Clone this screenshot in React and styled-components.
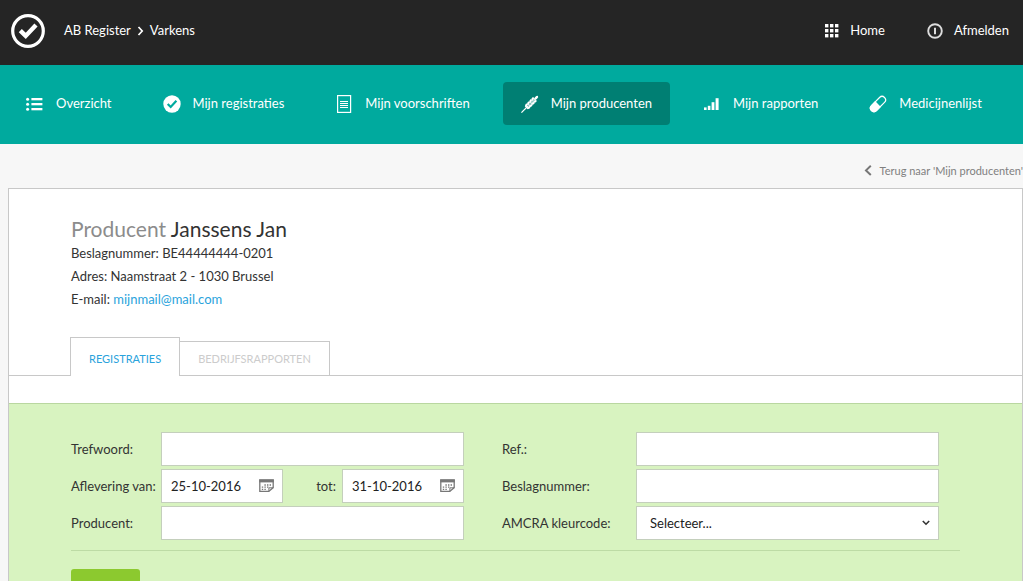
import { useState } from 'react'
import styled, { createGlobalStyle } from 'styled-components'

const GlobalStyle = createGlobalStyle`
	* {
		box-sizing: border-box;
	}
	body {
		margin: 0;
		background: #f7f7f7;
		color: #333;
		font-family: Lato, "Liberation Sans", sans-serif;
		font-size: 13px;
		line-height: 23px;
		overflow-x: hidden;
	}
	h1, p {
		margin: 0;
	}
	a {
		text-decoration: none;
	}
	input, select, button {
		font: inherit;
		color: inherit;
	}
`

const Header = styled.header`
	display: flex;
	align-items: center;
	justify-content: space-between;
	height: 65px;
	padding: 0 14px 4px 10px;
	background: #252525;
	color: #fff;
	a {
		color: inherit;
	}
`
const Brand = styled.div`
	display: flex;
	align-items: center;
	gap: 18px;
`
const Crumbs = styled.nav`
	display: flex;
	align-items: center;
	gap: 6px;
`
const HeaderLinks = styled.nav`
	display: flex;
	gap: 42px;
`
const HeaderLink = styled.a`
	display: flex;
	align-items: center;
	gap: 11px;
`

const Nav = styled.nav`
	display: flex;
	align-items: center;
	gap: 15px;
	height: 79px;
	padding: 0 8px 2px;
	background: #00aa9e;
`
const NavLink = styled.a`
	display: flex;
	align-items: center;
	gap: 12px;
	height: 43px;
	padding: 0 18px;
	border-radius: 4px;
	color: #fff;
	white-space: nowrap;
	background: ${({ $active }) => ($active ? '#007f73' : 'transparent')};
`

const BackBar = styled.div`
	display: flex;
	justify-content: flex-end;
	padding: 15px 0 6px;
`
const BackLink = styled.a`
	display: flex;
	align-items: center;
	gap: 8px;
	color: #808080;
	font-size: 11px;
`

const Panel = styled.main`
	margin-left: 8px;
	border: 1px solid #c8c8c8;
	border-bottom: 0;
	background: #fff;
`
const Info = styled.section`
	padding: 26px 62px;
`
const Title = styled.h1`
	font-size: 21px;
	font-weight: 400;
	line-height: 27px;
	span {
		color: #8c8c8c;
	}
`
const MailLink = styled.a`
	color: #2aa3dc;
`

const Tabs = styled.div`
	display: flex;
	align-items: flex-end;
	margin-bottom: 27px;
	padding: 0 61px;
	border-bottom: 1px solid #c8c8c8;
`
const Tab = styled.button`
	height: ${({ $active }) => ($active ? '39px' : '34px')};
	margin-bottom: ${({ $active }) => ($active ? '-1px' : '0')};
	padding: ${({ $active }) => ($active ? '3px 18px 0' : '0 18px')};
	border: 1px solid #c8c8c8;
	border-bottom: 0;
	border-left-width: ${({ $active }) => ($active ? '1px' : '0')};
	background: #fff;
	color: ${({ $active }) => ($active ? '#2aa3dc' : '#ccc')};
	font-size: 11px;
	text-transform: uppercase;
`

const Filter = styled.form`
	padding: 28px 62px;
	border-top: 1px solid #b9d7a0;
	background: #d8f3c0;
`
const Fields = styled.div`
	display: grid;
	grid-template-columns: 90px 1fr 172px 1fr;
	row-gap: 3px;
	align-items: center;
	padding: 0 21px 10px 0;
`
const Label = styled.label`
	padding-left: ${({ $second }) => ($second ? '38px' : '0')};
	white-space: nowrap;
`
const Input = styled.input`
	width: 100%;
	height: 34px;
	padding: 0 9px;
	border: 1px solid #c4cfbc;
	border-radius: 0;
	background: #fff;
	color: #222;
`
const Select = styled.select`
	width: 100%;
	height: 34px;
	padding: 0 13px;
	border: 1px solid #c4cfbc;
	border-radius: 0;
	background: #fff;
	color: #222;
	appearance: none;
`
const Control = styled.div`
	position: relative;
	width: ${({ $width }) => $width || 'auto'};
	svg {
		position: absolute;
		top: 50%;
		right: 9px;
		transform: translateY(-50%);
		pointer-events: none;
	}
`
const DateRange = styled.div`
	display: flex;
	align-items: center;
	label {
		margin-left: auto;
		margin-right: 6px;
	}
`
const Actions = styled.div`
	padding-top: 18px;
	border-top: 1px solid #bddba5;
`
const Submit = styled.button`
	min-width: 69px;
	height: 60px;
	border: 0;
	border-radius: 3px;
	background: #8cc92f;
	color: #fff;
`

const LogoIcon = () => (
	<svg width="36" height="36" viewBox="0 0 36 36" fill="none">
		<circle cx="18" cy="18" r="15.3" stroke="#fff" strokeWidth="3.2" />
		<path d="M10.3 17.6l5.4 5.3L26 12" stroke="#fff" strokeWidth="4.4" />
	</svg>
)
const CrumbIcon = () => (
	<svg width="7" height="10" viewBox="0 0 7 10" fill="none">
		<path d="M1.5 1l3.7 4-3.7 4" stroke="#fff" strokeWidth="1.7" />
	</svg>
)
const GridIcon = () => (
	<svg width="15" height="15" viewBox="0 0 15 15" fill="#fff">
		{[1, 6, 11].map((y) => [1, 6, 11].map((x) => <rect key={`${x}-${y}`} x={x} y={y} width="3.4" height="3.4" />))}
	</svg>
)
const PowerIcon = () => (
	<svg width="16" height="16" viewBox="0 0 16 16" fill="none" stroke="#ddd">
		<circle cx="8" cy="8" r="6.8" strokeWidth="1.9" />
		<path d="M8 4.7v6.6" strokeWidth="2" />
	</svg>
)
const ListIcon = () => (
	<svg width="18" height="18" viewBox="0 0 18 18" fill="#fff">
		{[3, 8, 13].map((y) => (
			<g key={y}>
				<circle cx="1.6" cy={y + 1.2} r="1.5" />
				<rect x="5.4" y={y} width="11" height="2.3" />
			</g>
		))}
	</svg>
)
const CheckIcon = () => (
	<svg width="18" height="18" viewBox="0 0 18 18">
		<circle cx="9" cy="9" r="8.7" fill="#fff" />
		<path d="M4.7 9l3 3 5.7-6.2" fill="none" stroke="#00aa9e" strokeWidth="2.2" />
	</svg>
)
const DocIcon = () => (
	<svg width="18" height="18" viewBox="0 0 18 18" fill="none" stroke="#fff">
		<rect x="2.6" y=".6" width="13" height="16.8" strokeWidth="1.2" />
		<path d="M5 6.5h8M5 8.5h8M5 10.5h8M5 12.5h8" strokeWidth="1" />
	</svg>
)
const WheatIcon = () => (
	<svg width="18" height="18" viewBox="0 0 18 18">
		<g transform="translate(0 18) rotate(-45)" fill="#fff">
			<rect x=".6" y="-.6" width="9" height="1.2" />
			{[7.5, 10.5, 13.5, 16.5].map((x) => (
				<g key={x}>
					<ellipse cx={x + 1.6} cy="-1.6" rx="1.9" ry="1.2" transform={`rotate(-20 ${x + 1.6} -1.6)`} />
					<ellipse cx={x + 1.6} cy="1.6" rx="1.9" ry="1.2" transform={`rotate(20 ${x + 1.6} 1.6)`} />
				</g>
			))}
			<rect x="8" y="-.3" width="13" height=".6" />
			<ellipse cx="21.4" cy="0" rx="2.6" ry="1.3" />
		</g>
	</svg>
)
const BarsIcon = () => (
	<svg width="18" height="18" viewBox="0 0 18 18" fill="#fff">
		<rect x="1" y="12.4" width="2.6" height="2.6" />
		<rect x="4.8" y="10.8" width="2.6" height="4.2" />
		<rect x="8.6" y="7.2" width="2.8" height="7.8" />
		<rect x="12.6" y="3.2" width="3" height="11.8" />
	</svg>
)
const PillIcon = () => (
	<svg width="18" height="18" viewBox="0 0 18 18">
		<g transform="rotate(-45 9 9)">
			<rect x="-.2" y="5.5" width="18.4" height="7" rx="3.5" fill="none" stroke="#fff" strokeWidth="1.2" />
			<path d="M9 4.9H3.300a4.100 4.100 0 000 8.200H9z" fill="#fff" />
		</g>
	</svg>
)
const BackIcon = () => (
	<svg width="8" height="12" viewBox="0 0 8 12" fill="none">
		<path d="M6.8.8L2 5.4 6.8 10" stroke="#777" strokeWidth="2" />
	</svg>
)
const CalendarIcon = () => (
	<svg width="15" height="14" viewBox="0 0 15 14" fill="none" stroke="#777">
		<path d="M.8 1v11.4h9l4.400-3.800V1z" strokeWidth="1.3" />
		<path d="M.2 2h14.6" strokeWidth="2.8" />
		<path d="M9.9 12.4V8.8h4.2" />
		<path d="M5.4 6h1.4M8 6h1.4M10.6 6H12M2.8 8.2h1.4M5.4 8.2h1.4M8 8.2h1.4M2.8 10.3h1.4M5.4 10.3h1.4" strokeWidth="1.3" />
	</svg>
)
const ChevronIcon = () => (
	<svg width="8" height="6" viewBox="0 0 8 6" fill="none">
		<path d="M.8 1L4 4.2 7.2 1" stroke="#333" strokeWidth="1.6" />
	</svg>
)

const navItems = [
	{ label: 'Overzicht', Icon: ListIcon },
	{ label: 'Mijn registraties', Icon: CheckIcon },
	{ label: 'Mijn voorschriften', Icon: DocIcon },
	{ label: 'Mijn producenten', Icon: WheatIcon, active: true },
	{ label: 'Mijn rapporten', Icon: BarsIcon },
	{ label: 'Medicijnenlijst', Icon: PillIcon },
]
const tabs = ['Registraties', 'Bedrijfsrapporten']

const DateField = ({ id, value }) => (
	<Control $width="122px">
		<Input id={id} defaultValue={value} />
		<CalendarIcon />
	</Control>
)

const App = () => {
	const [tab, setTab] = useState(tabs[0])
	return (
		<>
			<GlobalStyle />
			<Header>
				<Brand>
					<LogoIcon />
					<Crumbs>
						<a href="#register">AB Register</a>
						<CrumbIcon />
						<a href="#varkens">Varkens</a>
					</Crumbs>
				</Brand>
				<HeaderLinks>
					<HeaderLink href="#home">
						<GridIcon />
						Home
					</HeaderLink>
					<HeaderLink href="#afmelden">
						<PowerIcon />
						Afmelden
					</HeaderLink>
				</HeaderLinks>
			</Header>
			<Nav>
				{navItems.map(({ label, Icon, active }) => (
					<NavLink key={label} href="#nav" $active={active}>
						<Icon />
						{label}
					</NavLink>
				))}
			</Nav>
			<BackBar>
				<BackLink href="#producenten">
					<BackIcon />
					Terug naar 'Mijn producenten'
				</BackLink>
			</BackBar>
			<Panel>
				<Info>
					<Title>
						<span>Producent</span> Janssens Jan
					</Title>
					<p>Beslagnummer: BE44444444-0201</p>
					<p>Adres: Naamstraat 2 - 1030 Brussel</p>
					<p>
						E-mail: <MailLink href="mailto:mijnmail@mail.com">mijnmail@mail.com</MailLink>
					</p>
				</Info>
				<Tabs role="tablist">
					{tabs.map((name) => (
						<Tab key={name} role="tab" aria-selected={tab === name} $active={tab === name} onClick={() => setTab(name)}>
							{name}
						</Tab>
					))}
				</Tabs>
				<Filter onSubmit={(e) => e.preventDefault()}>
					<Fields>
						<Label htmlFor="trefwoord">Trefwoord:</Label>
						<Input id="trefwoord" />
						<Label htmlFor="ref" $second>Ref.:</Label>
						<Input id="ref" />
						<Label htmlFor="van">Aflevering van:</Label>
						<DateRange>
							<DateField id="van" value="25-10-2016" />
							<label htmlFor="tot">tot:</label>
							<DateField id="tot" value="31-10-2016" />
						</DateRange>
						<Label htmlFor="beslag" $second>Beslagnummer:</Label>
						<Input id="beslag" />
						<Label htmlFor="producent">Producent:</Label>
						<Input id="producent" />
						<Label htmlFor="amcra" $second>AMCRA kleurcode:</Label>
						<Control>
							<Select id="amcra">
								<option>Selecteer...</option>
							</Select>
							<ChevronIcon />
						</Control>
					</Fields>
					<Actions>
						<Submit type="submit">Zoek</Submit>
					</Actions>
				</Filter>
			</Panel>
		</>
	)
}

export default App
